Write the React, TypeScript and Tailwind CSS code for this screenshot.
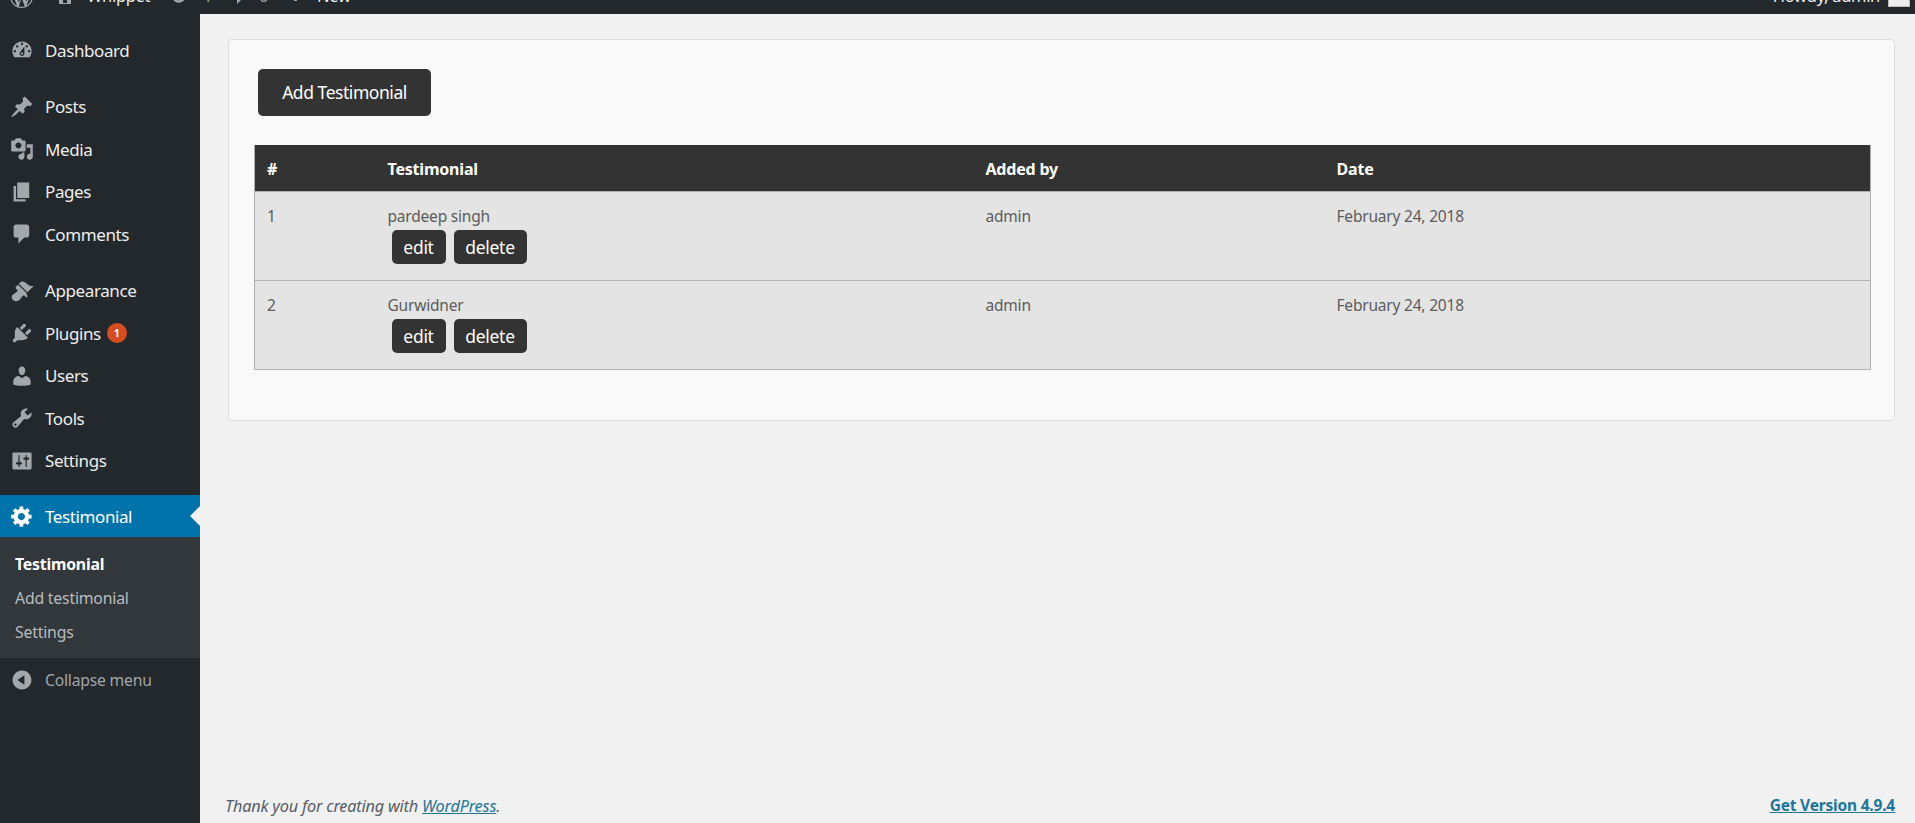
const F = { fontFamily: '"Noto Sans", sans-serif' };
const icons: Record<string, string> = {
  dashboard: "M3.76 16h12.48c1.1-1.37 1.76-3.11 1.76-5 0-4.42-3.58-8-8-8s-8 3.58-8 8c0 1.89.66 3.63 1.76 5zM10 4c.55 0 1 .45 1 1s-.45 1-1 1-1-.45-1-1 .45-1 1-1zM6 6c.55 0 1 .45 1 1s-.45 1-1 1-1-.45-1-1 .45-1 1-1zm8 0c.55 0 1 .45 1 1s-.45 1-1 1-1-.45-1-1 .45-1 1-1zm-5.37 5.55L12 7v6c0 1.1-.9 2-2 2s-2-.9-2-2c0-.57.24-1.08.63-1.45zM4 10c.55 0 1 .45 1 1s-.45 1-1 1-1-.45-1-1 .45-1 1-1zm12 0c.55 0 1 .45 1 1s-.45 1-1 1-1-.45-1-1 .45-1 1-1zm-5 3c0-.55-.45-1-1-1s-1 .45-1 1 .45 1 1 1 1-.45 1-1z",
  posts: "M10.44 3.02l1.82-1.82 6.36 6.35-1.83 1.82c-1.05-.68-2.48-.57-3.41.36l-.75.75c-.92.93-1.04 2.35-.35 3.41l-1.83 1.82-2.41-2.41-2.8 2.79c-.42.42-3.38 2.71-3.8 2.29s1.86-3.39 2.28-3.81l2.79-2.79L4.1 9.36l1.83-1.82c1.05.69 2.48.57 3.4-.36l.75-.75c.93-.92 1.05-2.35.36-3.41z",
  media: "M13 11V4c0-.55-.45-1-1-1h-1.67L9 1H5L3.67 3H2c-.55 0-1 .45-1 1v7c0 .55.45 1 1 1h10c.55 0 1-.45 1-1zM7 4.5c1.38 0 2.5 1.12 2.5 2.5S8.38 9.5 7 9.5 4.5 8.38 4.5 7 5.62 4.5 7 4.5zM14 6h5v10.5c0 1.38-1.12 2.5-2.5 2.5S14 17.88 14 16.5s1.12-2.5 2.5-2.5c.17 0 .34.02.5.05V9h-3V6zm-4 8.05V13h2v3.5c0 1.38-1.12 2.5-2.5 2.5S7 17.88 7 16.5 8.12 14 9.5 14c.17 0 .34.02.5.05z",
  pages: "M6 15V2h10v13H6zm-1 1h8v2H3V5h2v11z",
  comments: "M5 2h9c1.1 0 2 .9 2 2v7c0 1.1-.9 2-2 2h-2l-5 5v-5H5c-1.1 0-2-.9-2-2V4c0-1.1.9-2 2-2z",
  appearance: "M14.48 11.06L7.41 3.99l1.5-1.5c.5-.56 2.3-.47 3.51.32 1.21.8 1.43 1.28 2.91 2.1 1.18.64 2.45 1.26 4.45.85zm-.71.71L6.7 4.7 4.93 6.47c-.39.39-.39 1.02 0 1.41l1.06 1.06c.39.39.39 1.03 0 1.42-.6.6-1.43 1.11-2.21 1.69-.35.26-.7.53-1.01.84C1.43 13.23.75 15.54 2.6 17.4c1.86 1.85 4.17 1.17 5.54-.24.31-.31.58-.66.84-1.01.58-.78 1.09-1.61 1.69-2.21.39-.39 1.03-.39 1.42 0l1.06 1.06c.39.39 1.02.39 1.41 0z",
  plugins: "M13.11 4.36L9.87 7.6 8 5.73l3.24-3.24c.35-.34 1.05-.2 1.56.32.52.51.66 1.21.31 1.55zm-8 1.77l.91-1.12 9.01 9.01-1.19.84c-.71.71-2.63 1.16-3.82 1.16H6.14L4.9 17.26c-.59.59-1.54.59-2.12 0-.59-.58-.59-1.53 0-2.12l1.24-1.24v-3.88c0-1.13.4-3.19 1.09-3.89zm7.26 3.97l3.24-3.24c.34-.35 1.04-.21 1.55.31.52.51.66 1.21.31 1.55l-3.24 3.25z",
  users: "M10 9.25c-2.27 0-2.73-3.44-2.73-3.44C7 4.02 7.82 2 9.97 2c2.16 0 2.98 2.02 2.71 3.81 0 0-.41 3.44-2.68 3.44zm0 2.57L12.72 10c2.39 0 4.52 2.33 4.52 4.53v2.49s-3.65 1.13-7.24 1.13c-3.65 0-7.24-1.13-7.24-1.13v-2.49c0-2.25 1.94-4.48 4.47-4.48z",
  tools: "M16.68 9.77c-1.34 1.34-3.3 1.67-4.95.99l-5.41 6.52c-.99.99-2.59.99-3.58 0s-.99-2.59 0-3.57l6.52-5.42c-.68-1.65-.35-3.61.99-4.95 1.28-1.28 3.12-1.62 4.72-1.06l-2.89 2.89 2.82 2.82 2.86-2.87c.53 1.58.18 3.39-1.08 4.65zM3.81 16.21c.4.39 1.04.39 1.43 0 .4-.4.4-1.04 0-1.43-.39-.4-1.03-.4-1.43 0-.39.39-.39 1.03 0 1.43z",
  settings: "M18 16V4c0-.55-.45-1-1-1H3c-.55 0-1 .45-1 1v12c0 .55.45 1 1 1h14c.55 0 1-.45 1-1zM8 11h1c.55 0 1 .45 1 1s-.45 1-1 1H8v1.5c0 .28-.22.5-.5.5s-.5-.22-.5-.5V13H6c-.55 0-1-.45-1-1s.45-1 1-1h1V5.5c0-.28.22-.5.5-.5s.5.22.5.5V11zm5-2h-1c-.55 0-1-.45-1-1s.45-1 1-1h1V5.5c0-.28.22-.5.5-.5s.5.22.5.5V7h1c.55 0 1 .45 1 1s-.45 1-1 1h-1v5.5c0 .28-.22.5-.5.5s-.5-.22-.5-.5V9z",
  gear: "M18 12h-2.18c-.17.7-.44 1.35-.81 1.93l1.54 1.54-2.1 2.1-1.54-1.54c-.58.36-1.23.63-1.91.79V19H8v-2.18c-.68-.16-1.33-.43-1.91-.79l-1.54 1.54-2.12-2.12 1.54-1.54c-.36-.58-.63-1.23-.79-1.91H1V9.03h2.17c.16-.7.44-1.35.8-1.94L2.43 5.55l2.1-2.1 1.54 1.54c.58-.37 1.24-.64 1.93-.81V2h3v2.18c.68.16 1.33.43 1.91.79l1.54-1.54 2.12 2.12-1.54 1.54c.36.59.64 1.24.8 1.94H18V12zm-8.5 1.5c1.66 0 3-1.34 3-3s-1.34-3-3-3-3 1.34-3 3 1.34 3 3 3z",
  collapse: "M10 2.16c4.33 0 7.84 3.51 7.84 7.84s-3.51 7.84-7.84 7.84S2.16 14.33 2.16 10 5.71 2.16 10 2.16zm2 11.72V6.12L6.18 9.97z",
  wp: "M20 10c0-5.51-4.49-10-10-10C4.48 0 0 4.49 0 10c0 5.52 4.48 10 10 10 5.51 0 10-4.48 10-10zM7.78 15.37L4.37 6.22c.55-.02 1.17-.08 1.17-.08.5-.06.44-1.13-.06-1.11 0 0-1.45.11-2.37.11-.18 0-.37 0-.58-.01C4.12 2.69 6.89 1.06 10 1.06c2.32 0 4.43.87 6.03 2.33-.68-.11-1.65.39-1.65 1.58 0 .74.45 1.36.9 2.1.35.61.55 1.36.55 2.46 0 1.49-1.4 5-1.4 5l-3.03-8.37c.54-.02.82-.17.82-.17.5-.05.44-1.25-.06-1.22 0 0-1.44.12-2.38.12-.87 0-2.33-.12-2.33-.12-.5-.03-.56 1.2-.06 1.22l.92.08 1.26 3.41zM17.41 10c.24-.64.74-1.87.43-4.25.7 1.29 1.05 2.71 1.05 4.25 0 3.29-1.73 6.24-4.48 7.78.86-2.3 1.72-4.63 2.58-6.95zM6.1 18.09C3.12 16.65 1.06 13.57 1.06 10c0-1.31.23-2.51.72-3.63.71 1.95 1.42 3.9 2.14 5.85.72 1.96 1.43 3.92 2.18 5.87zm4.03-6.9l2.66 7.2c.02.04.04.09.06.12-.9.33-1.86.51-2.85.51-.84 0-1.65-.12-2.42-.35.87-2.51 1.73-5.04 2.55-7.48z",
  home: "M16 8.5l1.53 1.53-1.06 1.06L10 4.62l-6.47 6.47-1.06-1.06L10 2.5l4 4v-2h2v4zm-6-2.46l6 5.99V18H4v-5.97zM12 17v-5H8v5h4z",
  update: "M10.2 3.28c3.53 0 6.43 2.61 6.92 6h2.08l-3.5 4-3.5-4h2.32c-.45-1.97-2.21-3.45-4.32-3.45-1.45 0-2.73.71-3.54 1.78L4.95 5.66C6.23 4.2 8.11 3.28 10.2 3.28zm-.4 13.44c-3.52 0-6.43-2.61-6.92-6H.8l3.5-4c1.17 1.33 2.33 2.67 3.5 4H5.48c.45 1.97 2.21 3.45 4.32 3.45 1.45 0 2.73-.71 3.54-1.78l1.71 1.95c-1.28 1.46-3.15 2.38-5.25 2.38z",
  plus: "M17 7v3h-5v5H9v-5H4V7h5V2h3v5h5z",
};

function Icon({ name, className }: { name: string; className: string }) {
  return (
    <svg viewBox="0 0 20 20" className={className} fill="currentColor">
      <path d={icons[name]} fillRule="evenodd" />
    </svg>
  );
}

function Item({ icon, label, mt, children }: { icon: string; label: string; mt?: string; children?: React.ReactNode }) {
  return (
    <div className={`flex items-center h-[42.5px] ${mt ?? ""}`}>
      <div className="w-[45px] pl-[10px] shrink-0">
        <Icon name={icon} className="w-[24px] h-[24px] text-[#a3a7ab]" />
      </div>
      <span className="text-[17px] tracking-[-0.4px] text-[#eeeeee]">{label}</span>
      {children}
    </div>
  );
}

function SmallBtn({ label, w }: { label: string; w: string }) {
  return (
    <span className={`inline-flex items-center justify-center h-[34px] ${w} bg-[#333333] text-white rounded-[5px] text-[17.5px] tracking-[-0.3px]`}>
      {label}
    </span>
  );
}

function Row({ n, name, last }: { n: string; name: string; last?: boolean }) {
  const td = "align-top pt-[14px] pl-[12px] text-[15.5px] tracking-[-0.2px] text-[#5c5c5c] leading-[20px]";
  return (
    <tr className={`h-[89px] bg-[#e4e4e4] ${last ? "" : "border-b border-[#b0b0b0]"}`}>
      <td className={td}>{n}</td>
      <td className={td}>
        <div>{name}</div>
        <div className="flex gap-[8px] pl-[4px] mt-[4px]">
          <SmallBtn label="edit" w="w-[54px]" />
          <SmallBtn label="delete" w="w-[73px]" />
        </div>
      </td>
      <td className={td}>admin</td>
      <td className={td}>February 24, 2018</td>
    </tr>
  );
}

export default function App() {
  const th = "text-left pl-[12px] pt-[2px] text-[16px] tracking-[-0.2px] font-bold text-white";
  return (
    <div className="w-[1915px] h-[823px] overflow-hidden flex flex-col bg-[#f1f1f1]" style={F}>
      <div className="h-[14px] shrink-0 bg-[#23282d] overflow-hidden flex items-end justify-between text-[#eeeeee] text-[16.5px] tracking-[-0.3px]">
        <div className="flex items-center h-[24px] mb-[6px] pl-[10px] text-[#a3a7ab] whitespace-nowrap">
          <Icon name="wp" className="w-[23px] h-[23px]" />
          <Icon name="home" className="w-[20px] h-[20px] ml-[22px]" />
          <span className="text-[#eeeeee] ml-[12px] w-[60px]">Whippet</span>
          <Icon name="update" className="w-[20px] h-[20px] ml-[22px]" />
          <span className="ml-[14px] w-[9px]">1</span>
          <Icon name="comments" className="w-[20px] h-[20px] ml-[18px]" />
          <span className="ml-[9px] w-[9px]">0</span>
          <Icon name="plus" className="w-[20px] h-[20px] ml-[17px]" />
          <span className="text-[#eeeeee] ml-[12px] font-normal">New</span>
        </div>
        <div className="flex items-center h-[24px] mb-[6px] gap-[8px] pr-[5px] whitespace-nowrap">
          <span>Howdy, admin</span>
          <span className="w-[22px] h-[22px] bg-[#eeeeee] border border-[#bbbbbb]" />
        </div>
      </div>

      <div className="flex flex-1 min-h-0">
        <aside className="w-[200px] shrink-0 bg-[#23282d] pt-[15px]">
          <Item icon="dashboard" label="Dashboard" />
          <Item icon="posts" label="Posts" mt="mt-[14px]" />
          <Item icon="media" label="Media" />
          <Item icon="pages" label="Pages" />
          <Item icon="comments" label="Comments" />
          <Item icon="appearance" label="Appearance" mt="mt-[14px]" />
          <Item icon="plugins" label="Plugins">
            <span className="ml-[6px] w-[20px] h-[20px] rounded-full bg-[#d54e21] text-white text-[10px] font-bold flex items-center justify-center">1</span>
          </Item>
          <Item icon="users" label="Users" />
          <Item icon="tools" label="Tools" />
          <Item icon="settings" label="Settings" />
          <div className="relative flex items-center h-[42px] mt-[13px] bg-[#0073aa]">
            <div className="w-[45px] pl-[10px] shrink-0">
              <Icon name="gear" className="w-[24px] h-[24px] text-white" />
            </div>
            <span className="text-[17px] tracking-[-0.4px] text-white pt-[1px]">Testimonial</span>
            <span className="absolute right-0 top-[11px] border-y-[10px] border-r-[10px] border-y-transparent border-r-[#f1f1f1]" />
          </div>
          <div className="bg-[#32373c] h-[121px] pt-[10px] pl-[15px] text-[15.8px] tracking-[-0.2px] text-[#b9bcbf]">
            <div className="h-[34px] leading-[34px] font-bold text-white">Testimonial</div>
            <div className="h-[34px] leading-[34px]">Add testimonial</div>
            <div className="h-[34px] leading-[34px]">Settings</div>
          </div>
          <div className="flex items-center h-[42px] mt-[1px]">
            <div className="w-[45px] pl-[10px] shrink-0">
              <Icon name="collapse" className="w-[24px] h-[24px] text-[#a3a7ab]" />
            </div>
            <span className="text-[15.7px] tracking-[-0.2px] text-[#a0a5aa] pt-[1px]">Collapse menu</span>
          </div>
        </aside>

        <main className="flex-1 min-w-0 flex flex-col pl-[28px] pr-[20px] pt-[25px]">
          <div className="h-[382px] bg-[#f9f9f9] border border-[#dddddd] rounded-[4px] pl-[25px] pr-[23px]">
            <div className="pt-[29px] pl-[4px]">
              <span className="inline-flex items-center justify-center w-[173px] h-[47px] bg-[#333333] text-white rounded-[5px] text-[17.5px] tracking-[-0.45px]">Add Testimonial</span>
            </div>
            <table className="mt-[29px] w-full table-fixed border-collapse border border-[#b0b0b0] border-t-0">
              <colgroup>
                <col className="w-[121px]" />
                <col className="w-[598px]" />
                <col className="w-[351px]" />
                <col />
              </colgroup>
              <thead>
                <tr className="h-[46px] bg-[#333333] border-b border-[#b0b0b0]">
                  <th className={th}>#</th>
                  <th className={th}>Testimonial</th>
                  <th className={th}>Added by</th>
                  <th className={th}>Date</th>
                </tr>
              </thead>
              <tbody>
                <Row n="1" name="pardeep singh" />
                <Row n="2" name="Gurwidner" last />
              </tbody>
            </table>
          </div>
          <div className="mt-auto pb-[5px] flex justify-between items-center text-[15.5px] text-[#555d66]">
            <span className="italic -ml-[3px] text-[16.3px] tracking-[-0.2px]">Thank you for creating with <a className="underline text-[#21759b]">WordPress</a>.</span>
            <a className="underline font-bold text-[#21759b] tracking-[-0.2px]">Get Version 4.9.4</a>
          </div>
        </main>
      </div>
    </div>
  );
}
